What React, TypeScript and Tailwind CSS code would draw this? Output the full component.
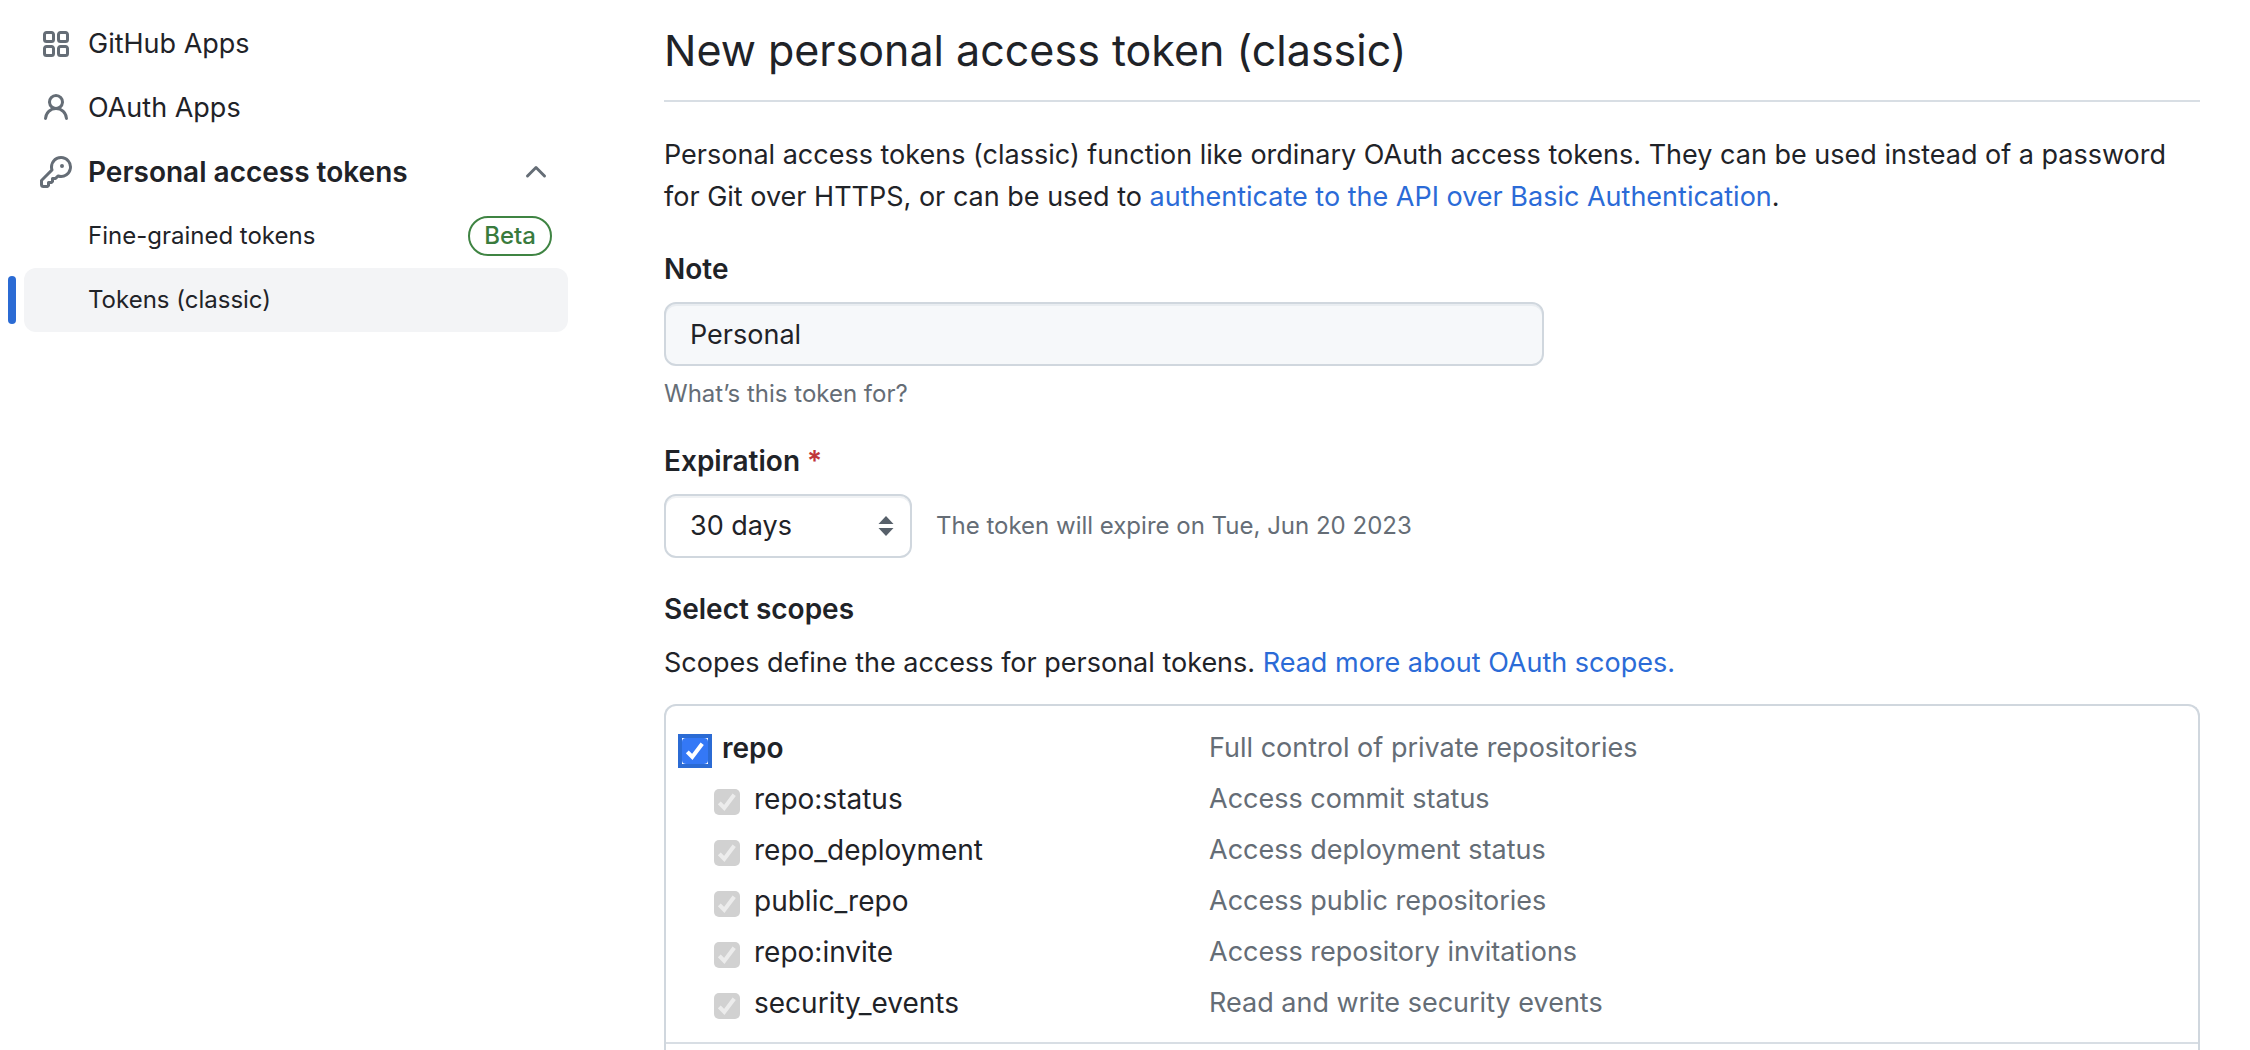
import { useState } from 'react';
import type { ReactNode } from 'react';

const PATHS = {
  apps: 'M1.5 3.25c0-.966.784-1.75 1.75-1.75h2.5c.966 0 1.75.784 1.75 1.75v2.5A1.75 1.75 0 0 1 5.75 7.5h-2.5A1.75 1.75 0 0 1 1.5 5.75Zm7 0c0-.966.784-1.75 1.75-1.75h2.5c.966 0 1.75.784 1.75 1.75v2.5a1.75 1.75 0 0 1-1.75 1.75h-2.5A1.75 1.75 0 0 1 8.5 5.75Zm-7 7c0-.966.784-1.75 1.75-1.75h2.5c.966 0 1.75.784 1.75 1.75v2.5a1.75 1.75 0 0 1-1.75 1.75h-2.5a1.75 1.75 0 0 1-1.75-1.75Zm7 0c0-.966.784-1.75 1.75-1.75h2.5c.966 0 1.75.784 1.75 1.75v2.5a1.75 1.75 0 0 1-1.75 1.75h-2.5a1.75 1.75 0 0 1-1.75-1.75ZM3.25 3a.25.25 0 0 0-.25.25v2.5c0 .138.112.25.25.25h2.5A.25.25 0 0 0 6 5.75v-2.5A.25.25 0 0 0 5.75 3Zm7 0a.25.25 0 0 0-.25.25v2.5c0 .138.112.25.25.25h2.5a.25.25 0 0 0 .25-.25v-2.5a.25.25 0 0 0-.25-.25Zm-7 7a.25.25 0 0 0-.25.25v2.5c0 .138.112.25.25.25h2.5a.25.25 0 0 0 .25-.25v-2.5a.25.25 0 0 0-.25-.25Zm7 0a.25.25 0 0 0-.25.25v2.5c0 .138.112.25.25.25h2.5a.25.25 0 0 0 .25-.25v-2.5a.25.25 0 0 0-.25-.25Z',
  person:
    'M10.561 8.073a6 6 0 0 1 3.432 5.142.75.75 0 1 1-1.498.07 4.5 4.5 0 0 0-8.99 0 .75.75 0 0 1-1.498-.07 6.004 6.004 0 0 1 3.431-5.142 3.999 3.999 0 1 1 5.123 0ZM10.5 5a2.5 2.5 0 1 0-5 0 2.5 2.5 0 0 0 5 0Z',
  key: 'M10.5 0a5.499 5.499 0 1 1-1.288 10.848l-.932.932a.749.749 0 0 1-.53.22H7v.75a.749.749 0 0 1-.22.53l-.5.5a.749.749 0 0 1-.53.22H5v.75a.749.749 0 0 1-.22.53l-.5.5a.749.749 0 0 1-.53.22h-2A1.75 1.75 0 0 1 0 14.25v-2c0-.199.079-.389.22-.53l4.932-4.932A5.5 5.5 0 0 1 10.5 0Zm-4 5.500c-.001.431.069.86.205 1.269a.75.75 0 0 1-.181.768L1.5 12.56v1.69c0 .138.112.25.25.25h1.69l.06-.06v-1.19a.75.75 0 0 1 .75-.75h1.19l.06-.06v-1.19a.75.75 0 0 1 .75-.75h1.19l1.023-1.025a.75.75 0 0 1 .768-.18A4 4 0 1 0 6.5 5.5ZM11 6a1 1 0 1 1 0-2 1 1 0 0 1 0 2Z',
  chevronUp:
    'M3.22 10.53a.749.749 0 0 1 0-1.06l4.25-4.25a.749.749 0 0 1 1.06 0l4.25 4.25a.749.749 0 1 1-1.06 1.06L8 6.811 4.28 10.53a.749.749 0 0 1-1.06 0Z',
};

function Icon({ name }: { name: keyof typeof PATHS }) {
  return (
    <svg viewBox="0 0 16 16" className="size-8 shrink-0 fill-[#656d76]" aria-hidden="true">
      <path d={PATHS[name]} />
    </svg>
  );
}

function NavLink({ icon, children }: { icon: keyof typeof PATHS; children: ReactNode }) {
  return (
    <li>
      <a href="#" className="flex h-16 items-center gap-4 px-4">
        <Icon name={icon} />
        {children}
      </a>
    </li>
  );
}

function Sidebar() {
  const [open, setOpen] = useState(true);
  return (
    <nav aria-label="Developer settings" className="w-[568px] shrink-0 pt-3 pl-6">
      <ul>
        <NavLink icon="apps">GitHub Apps</NavLink>
        <NavLink icon="person">OAuth Apps</NavLink>
        <li>
          <button
            type="button"
            aria-expanded={open}
            onClick={() => setOpen(!open)}
            className="flex h-16 w-full items-center gap-4 px-4 text-[28px] font-semibold"
          >
            <Icon name="key" />
            <span className="grow text-left">Personal access tokens</span>
            <Icon name="chevronUp" />
          </button>
          {open && (
            <ul className="text-2xl">
              <li>
                <a href="#" className="flex h-16 items-center justify-between pr-4 pl-16">
                  Fine-grained tokens
                  <span className="flex h-10 items-center rounded-full border-2 border-[#3f8443] px-[14px] font-medium text-[#397b3d]">
                    Beta
                  </span>
                </a>
              </li>
              <li className="relative">
                <span className="absolute top-2 -left-4 h-12 w-2 rounded-full bg-[#2b6bd4]" />
                <a
                  href="#"
                  aria-current="page"
                  className="flex h-16 items-center rounded-xl bg-[#f3f4f6] pr-4 pl-16"
                >
                  Tokens (classic)
                </a>
              </li>
            </ul>
          )}
        </li>
      </ul>
    </nav>
  );
}

function Checkmark({ className }: { className: string }) {
  return (
    <svg
      viewBox="0 0 26 26"
      className={'pointer-events-none col-start-1 row-start-1 size-[26px] fill-none ' + className}
      strokeWidth="4"
      aria-hidden="true"
    >
      <path d="M5.3 13.8 10.3 19 20.2 5.8" />
    </svg>
  );
}

const CHILD_SCOPES = [
  ['repo:status', 'Access commit status'],
  ['repo_deployment', 'Access deployment status'],
  ['public_repo', 'Access public repositories'],
  ['repo:invite', 'Access repository invitations'],
  ['security_events', 'Read and write security events'],
];

function Scopes() {
  const [repo, setRepo] = useState(true);
  return (
    <div className="mt-5 flex grow flex-col rounded-t-xl border-2 border-b-0 border-[#d0d7de]">
      <ul className="border-b-2 border-[#d8dee4] pt-4 pb-[14px]">
        <li className="flex h-[51px] items-center">
          <label className="flex w-[543px] items-center gap-[10px] pl-3 text-[28px] font-semibold">
            <span className="mt-[6px] grid border-4 border-[#2b6bd4] bg-white">
              <input
                type="checkbox"
                checked={repo}
                onChange={() => setRepo(!repo)}
                className="col-start-1 row-start-1 size-[26px] appearance-none rounded-[4px] bg-white checked:bg-[#3478f6]"
              />
              {repo && <Checkmark className="stroke-white" />}
            </span>
            repo
          </label>
          <span className="text-[#656d76]">Full control of private repositories</span>
        </li>
        {CHILD_SCOPES.map(([name, description]) => (
          <li key={name} className="flex h-[51px] items-center">
            <label className="flex w-[543px] items-center gap-[14px] pl-12 text-[28px]">
              <span className="mt-[6px] grid">
                <input
                  type="checkbox"
                  checked={repo}
                  disabled
                  readOnly
                  className="col-start-1 row-start-1 size-[26px] appearance-none rounded-[5px] bg-[#d1d1d1]"
                />
                {repo && <Checkmark className="stroke-[#ececec]" />}
              </span>
              {name}
            </label>
            <span className="text-[#656d76]">{description}</span>
          </li>
        ))}
      </ul>
    </div>
  );
}

export default function App() {
  const [note, setNote] = useState('Personal');
  return (
    <div className="flex min-h-screen gap-24 bg-white pr-[50px] font-[Inter,sans-serif] text-[27px] leading-[42px] text-[#1f2328]">
      <Sidebar />
      <main className="flex min-w-0 grow flex-col">
        <h1 className="border-b-2 border-[#d8dee4] pt-[14px] pb-[14px] text-[43px] leading-[72px]">
          New personal access token (classic)
        </h1>
        <p className="mt-8">
          Personal access tokens (classic) function like ordinary OAuth access tokens. They can be used instead of a
          password for Git over HTTPS, or can be used to{' '}
          <a href="#" className="text-[#2b6bd7]">
            authenticate to the API over Basic Authentication
          </a>
          .
        </p>

        <label htmlFor="note" className="mt-[30px] text-[28px] font-semibold">
          Note
        </label>
        <input
          id="note"
          value={note}
          onChange={(e) => setNote(e.target.value)}
          className="mt-3 h-16 w-[880px] rounded-xl border-2 border-[#d0d7de] bg-[#f6f8fa] px-6 inset-shadow-[0_2px_0_#e9edf1]"
        />
        <p className="mt-[10px] text-2xl leading-9 text-[#656d76]">What’s this token for?</p>

        <label htmlFor="expiration" className="mt-7 text-[28px] font-semibold">
          Expiration <span className="text-[#c0343a]">*</span>
        </label>
        <div className="mt-3 flex items-center gap-6">
          <div className="relative">
            <select
              id="expiration"
              defaultValue="30"
              className="h-16 w-[248px] appearance-none rounded-xl border-2 border-[#d0d7de] bg-white px-6 inset-shadow-[0_2px_0_#f0f2f4]"
            >
              <option value="7">7 days</option>
              <option value="30">30 days</option>
              <option value="60">60 days</option>
              <option value="90">90 days</option>
            </select>
            <svg
              viewBox="0 0 16 20"
              className="pointer-events-none absolute top-[22px] right-[18px] h-5 w-4 fill-[#57606a]"
              aria-hidden="true"
            >
              <path d="M8 0 15.500 8H.5ZM8 20 .5 12h15Z" />
            </svg>
          </div>
          <span className="text-2xl text-[#656d76]">The token will expire on Tue, Jun 20 2023</span>
        </div>

        <h2 className="mt-[30px] text-[28px] font-semibold">Select scopes</h2>
        <p className="mt-3">
          Scopes define the access for personal tokens.{' '}
          <a href="#" className="text-[#2b6bd7]">
            Read more about OAuth scopes.
          </a>
        </p>
        <Scopes />
      </main>
    </div>
  );
}
